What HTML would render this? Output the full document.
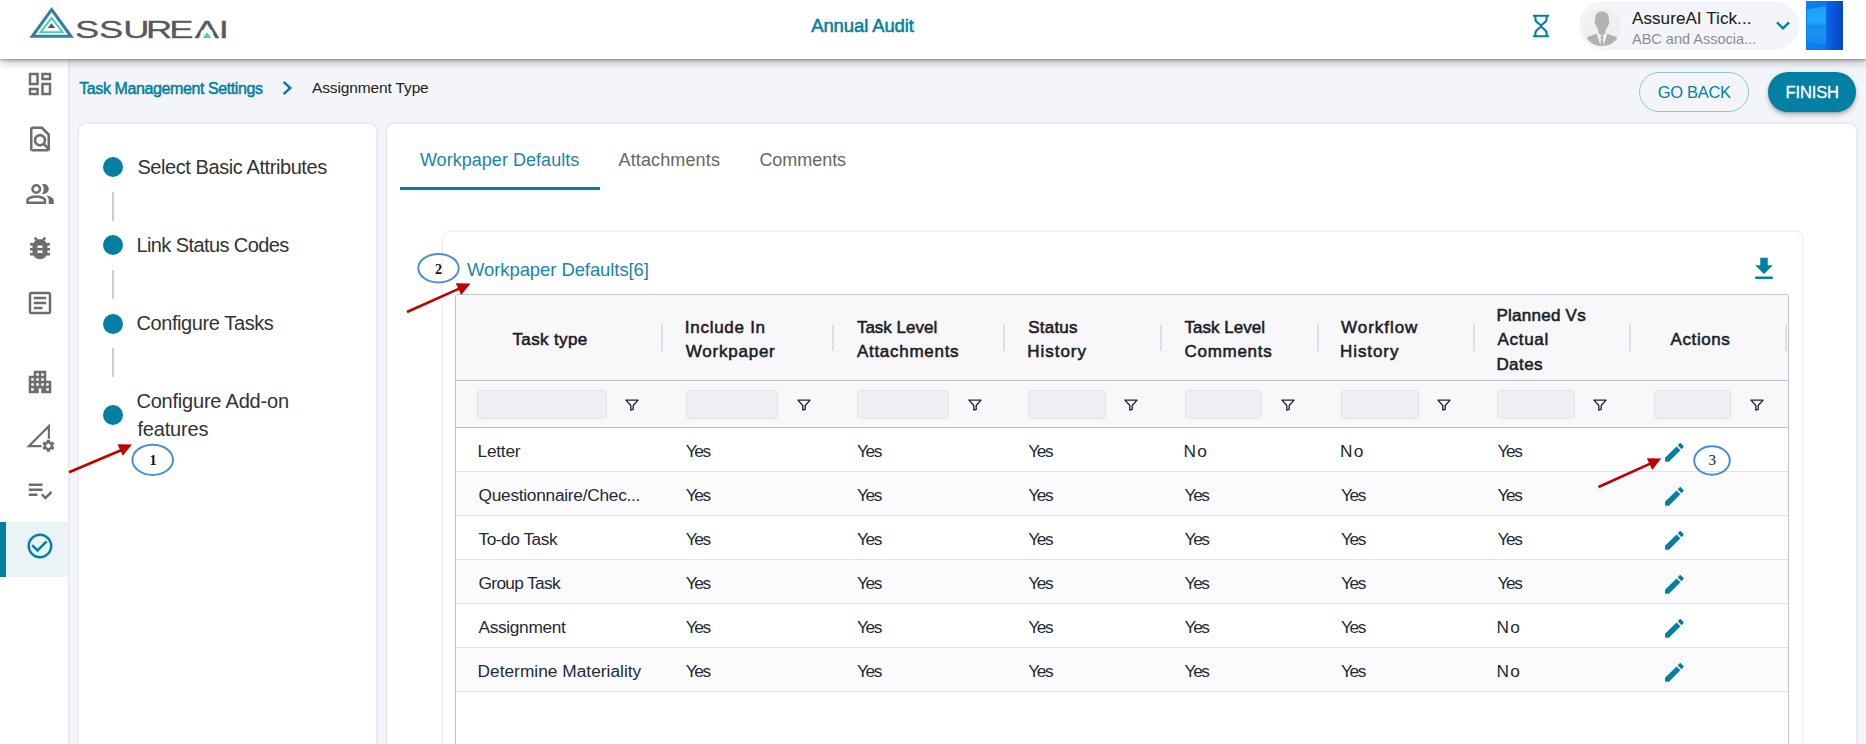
<!DOCTYPE html>
<html lang="en">
<head>
<meta charset="utf-8">
<title>Assignment Type - Workpaper Defaults</title>
<style>
*{box-sizing:border-box;margin:0;padding:0}
html,body{width:1866px;height:744px;overflow:hidden;background:#f4f5fa;font-family:"Liberation Sans",sans-serif}
#app{position:relative;width:1866px;height:744px;overflow:hidden;background:#f4f5fa}
.abs{position:absolute}
.t{position:absolute;white-space:nowrap;line-height:1;z-index:5}
header{position:absolute;left:0;top:0;width:1866px;height:59.3px;background:#fff;box-shadow:0 1px 3px rgba(0,0,0,.32),0 3px 9px rgba(0,0,0,.27);z-index:3}
nav{position:absolute;left:0;top:59px;width:70px;height:700px;background:#fff;border-right:2px solid #ebebec;z-index:2}
nav svg{position:absolute;left:25px;width:30px;height:30px;fill:#6d6d6d}
.active{position:absolute;left:0;top:463px;width:68px;height:54.5px;background:#eaf4f7;border-left:6px solid #0280a3}
.panel{position:absolute;background:#fff;border-radius:7px;box-shadow:0 0 3px rgba(70,70,110,.2);z-index:1}
.dot{position:absolute;width:20px;height:20px;border-radius:50%;background:#0280a3;left:23.8px}
.vl{position:absolute;left:33px;width:1.8px;height:29.3px;background:#cfcfcf}
.pill{position:absolute;left:1579px;top:.8px;width:220.4px;height:49.2px;border-radius:24.6px;background:#f4f5fa}
.btn{position:absolute;top:71.8px;height:40.7px;border-radius:20.4px}
.card{position:absolute;left:441.5px;top:231px;width:1361px;height:560px;border:1px solid #efeff3;border-radius:7px;background:#fff;box-shadow:0 0 3px rgba(80,80,120,.08);z-index:1}
.grid{position:absolute;left:455px;top:294px;width:1334px;height:500px;border:1px solid #bdc2ca;border-top-color:#c6cad1;background:#fff;z-index:2;border-radius:3px;overflow:hidden}
.gh{position:absolute;left:0;top:0;width:100%;height:133px;background:#f8f8fa;border-bottom:1px solid #babfc7}
.ghl{position:absolute;left:0;top:84.6px;width:100%;height:1px;background:#babfc7}
.sep{position:absolute;top:30px;width:2px;height:26px;background:#dcdfe5}
.fi{position:absolute;top:95px;height:29px;border:1px solid #e3e3ea;border-radius:4px;background:#eeeef3}
.fic{position:absolute;top:103.6px;width:14px;height:12.1px}
.row{position:absolute;left:0;width:100%;height:44px;border-bottom:1px solid #dde2eb}
.row.odd{background:#fbfbfd}
.pen{position:absolute;left:1205.9px;top:11.8px;width:24.8px;height:24.8px;fill:#0280a3}
.ann{position:absolute;left:0;top:0;width:1866px;height:744px;z-index:9;pointer-events:none}
</style>
</head>
<body>
<div id="app">

<header>
  <svg class="abs" style="left:26px;top:3px" width="210" height="42" viewBox="26 3 210 42">
    <polygon points="51.6,9.6 32.3,36.3 71,36.3" fill="none" stroke="#2f7fa8" stroke-width="3"/>
    <polygon points="51.6,17.8 40.6,32.2 62.6,32.2" fill="none" stroke="#4fcdb4" stroke-width="2"/>
    <polygon points="51.4,23.2 47.8,27.9 55.2,27.9" fill="#555"/>
    <g transform="translate(77 37.9) scale(1.47 1)"><text x="-1.29 14.9 31.53 47.0 62.8 80.07 96.43" y="0" font-family="Liberation Sans, sans-serif" font-size="24.7" fill="#58595b" stroke="#58595b" stroke-width=".3">SSUREAI</text></g>
    <polygon points="202.1,30.1 211.6,30.1 213.7,34.2 200.0,34.2" fill="#fff"/>
    <polygon points="207,32.2 202.8,37.9 211.2,37.9" fill="#4fcdb4"/>
  </svg>
  <svg class="abs" style="left:1531px;top:13px" width="20" height="26" viewBox="0 0 20 26" fill="none" stroke="#0280a3" stroke-width="2.1" stroke-linecap="round">
    <path d="M2.8 2.8H17.2M2.8 23.2H17.2"/>
    <path d="M4.4 3v3.4c0 3 5.6 5 5.6 6.6s-5.600 3.600-5.600 6.600V23M15.600 3v3.400c0 3-5.600 5-5.600 6.600s5.600 3.600 5.600 6.600V23"/>
  </svg>
  <div class="pill"></div>
  <svg class="abs" style="left:1582.4px;top:7.3px" width="40" height="40" viewBox="0 0 40 40">
    <defs><clipPath id="av"><circle cx="20" cy="20" r="19.1"/></clipPath></defs>
    <circle cx="20" cy="20" r="19.1" fill="#f0f0f0"/>
    <g clip-path="url(#av)" fill="#b1b1b1">
      <path d="M20 4.500c4.200 0 6.800 2.600 6.800 6.400v3.200c.700.300.800 1.600.300 2.800-.300.800-.700 1.100-1 1.200-.500 2-1.500 3.600-2.500 4.600v3.200l9.500 3.600c1.600.600 2.700 2 2.900 3.700l.500 7.800H3.500l.500-7.800c.200-1.700 1.300-3.100 2.900-3.700l9.500-3.600v-3.200c-1-1-2-2.600-2.500-4.600-.300-.100-.700-.400-1-1.200-.500-1.200-.400-2.500.300-2.800v-3.200c0-3.800 2.600-6.400 6.800-6.400z"/>
    </g>
    <g clip-path="url(#av)"><path d="M16.400 25.900l3.600 3 3.600-3 1.800.700-3.600 11.400h-3.600l-3.600-11.400z" fill="#f0f0f0"/>
    <path d="M19 29.200h2l.700 1.500-.900 1 .900 6.300h-3.400l.900-6.300-.900-1z" fill="#b1b1b1"/></g>
  </svg>
  <svg class="abs" style="left:1774px;top:19px" width="18" height="13" viewBox="0 0 18 13" fill="none" stroke="#0280a3" stroke-width="2.400"><path d="M3 3.400l6 6 6-6"/></svg>
  <div class="abs" style="left:1806.3px;top:1.1px;width:36.5px;height:48.7px;background:linear-gradient(90deg,#0a80ee 0%,#0a7aec 50%,#0a64e4 58%,#0a55d8 75%,#0745c4 100%)">
    <div class="abs" style="left:.3px;top:5px;width:19.6px;height:38.400px;background:linear-gradient(180deg,#1c9ffc 0%,#22a8ff 40%,#1b98f6 49%,#148cf0 51%,#1a94f2 70%,#1688ea 100%);clip-path:polygon(0 9%,100% 0,100% 100%,0 95%)"></div>
  </div>
</header>

<nav>
  <!-- centers (page y): 84,138.600,193,248,303,382,437,491,546 ; nav top = 59 -->
  <svg style="top:10px" viewBox="0 0 24 24"><path d="M19 5v2h-4V5h4M9 5v6H5V5h4m10 8v6h-4v-6h4M9 17v2H5v-2h4M21 3h-8v6h8V3zM11 3H3v10h8V3zm10 8h-8v10h8V11zm-10 4H3v6h8v-6z"/></svg>
  <svg style="top:64.500px" viewBox="0 0 24 24"><path d="M14 2H6c-1.100 0-1.990.900-1.990 2L4 20c0 1.100.890 2 1.990 2H18c1.100 0 2-.900 2-2V8l-6-6zM6 4h7l5 5v8.580l-1.840-1.840c1.280-1.940 1.070-4.570-.640-6.280C14.550 8.490 13.280 8 12 8c-1.280 0-2.550.490-3.530 1.460-1.950 1.950-1.950 5.110 0 7.050.970.970 2.250 1.460 3.530 1.460.960 0 1.920-.280 2.750-.830L17.600 20H6V4zm8.110 11.100c-.560.560-1.310.880-2.110.880s-1.550-.310-2.110-.880c-.560-.560-.880-1.310-.880-2.110s.310-1.550.880-2.110c.560-.570 1.310-.880 2.110-.880s1.550.310 2.110.880c.560.560.880 1.310.880 2.110s-.310 1.550-.880 2.110z"/></svg>
  <svg style="top:119.5px" viewBox="0 -960 960 960"><path d="M40-160v-112q0-34 17.500-62.500T104-378q62-31 126-46.500T360-440q66 0 130 15.500T616-378q29 15 46.500 43.500T680-272v112H40Zm720 0v-120q0-44-24.500-84.500T666-434q51 6 96 20.500t84 35.500q36 20 55 44.500t19 53.500v120H760ZM360-480q-66 0-113-47t-47-113q0-66 47-113t113-47q66 0 113 47t47 113q0 66-47 113t-113 47Zm400-160q0 66-47 113t-113 47q-11 0-28-2.500t-28-5.500q27-32 41.500-71t14.500-81q0-42-14.500-81T544-792q14-5 28-6.500t28-1.500q66 0 113 47t47 113ZM120-240h480v-32q0-11-5.500-20T580-306q-54-27-109-40.500T360-360q-56 0-111 13.500T140-306q-9 5-14.500 14t-5.500 20v32Zm240-320q33 0 56.500-23.500T440-640q0-33-23.500-56.500T360-720q-33 0-56.500 23.500T280-640q0 33 23.500 56.500T360-560Z"/></svg>
  <svg style="top:174px" viewBox="0 0 24 24"><path d="M20 8h-2.810c-.450-.780-1.070-1.450-1.820-1.960L17 4.410 15.590 3l-2.170 2.170C12.960 5.060 12.490 5 12 5c-.490 0-.960.060-1.410.170L8.410 3 7 4.410l1.620 1.630C7.880 6.550 7.260 7.220 6.810 8H4v2h2.090c-.050.330-.090.660-.090 1v1H4v2h2v1c0 .340.040.670.090 1H4v2h2.810c1.040 1.790 2.970 3 5.190 3s4.150-1.210 5.190-3H20v-2h-2.090c.050-.330.090-.660.090-1v-1h2v-2h-2v-1c0-.340-.040-.670-.090-1H20V8zm-6 8h-4v-2h4v2zm0-4h-4v-2h4v2z"/></svg>
  <svg style="top:229px" viewBox="0 0 24 24"><path d="M19 5v14H5V5h14m0-2H5c-1.100 0-2 .900-2 2v14c0 1.100.900 2 2 2h14c1.100 0 2-.900 2-2V5c0-1.100-.900-2-2-2z"/><path d="M14 17H7v-2h7v2zm3-4H7v-2h10v2zm0-4H7V7h10v2z"/></svg>
  <svg style="top:308px" viewBox="0 0 24 24"><path d="M17 11V3H7v4H3v14h8v-4h2v4h8V11h-4zM7 19H5v-2h2v2zm0-4H5v-2h2v2zm0-4H5V9h2v2zm4 4H9v-2h2v2zm0-4H9V9h2v2zm0-4H9V5h2v2zm4 8h-2v-2h2v2zm0-4h-2V9h2v2zm0-4h-2V5h2v2zm4 12h-2v-2h2v2zm0-4h-2v-2h2v2z"/></svg>
  <svg style="top:363px" viewBox="0 0 24 24"><path d="M19.1 13.4V3.3L3 19.3H13.2" fill="none" stroke="#6d6d6d" stroke-width="1.7"/><g transform="translate(18.7 19) scale(.5) translate(-12 -12)"><path d="M19.140 12.940c.040-.300.060-.610.060-.940 0-.320-.020-.640-.070-.940l2.030-1.580c.180-.140.230-.410.120-.610l-1.920-3.320c-.120-.220-.370-.290-.590-.220l-2.390.960c-.500-.380-1.030-.700-1.620-.940l-.360-2.540c-.040-.240-.240-.410-.480-.410h-3.840c-.240 0-.430.170-.470.410l-.360 2.540c-.590.240-1.130.570-1.620.940l-2.390-.960c-.220-.080-.470 0-.590.220L2.740 8.870c-.120.210-.080.470.120.610l2.030 1.580c-.050.300-.090.630-.090.940s.020.640.070.940l-2.030 1.580c-.180.140-.230.410-.120.610l1.920 3.320c.120.220.370.290.590.220l2.390-.960c.500.380 1.030.700 1.620.940l.360 2.540c.050.240.240.410.480.410h3.840c.240 0 .440-.170.470-.410l.360-2.540c.590-.240 1.130-.560 1.620-.940l2.390.960c.220.080.470 0 .590-.220l1.920-3.320c.120-.220.070-.470-.120-.610l-2.010-1.580zM12 15.600c-1.980 0-3.600-1.620-3.600-3.600s1.620-3.600 3.600-3.600 3.600 1.620 3.600 3.600-1.620 3.600-3.600 3.600z"/></g></svg>
  <svg style="top:417px" viewBox="0 0 24 24"><path d="M3 10h11v2H3zm0-4h11v2H3zm0 8h7v2H3zm17.590-2.070l-4.250 4.240-2.120-2.120-1.410 1.410L16.340 19 22 13.340z"/></svg>
  <div class="active"></div>
  <svg style="top:472px;fill:#0280a3" viewBox="0 0 24 24"><path d="M16.590 7.580L10 14.170l-3.590-3.580L5 12l5 5 8-8zM12 2C6.480 2 2 6.480 2 12s4.480 10 10 10 10-4.480 10-10S17.520 2 12 2zm0 18c-4.420 0-8-3.580-8-8s3.580-8 8-8 8 3.580 8 8-3.580 8-8 8z"/></svg>
</nav>

<!-- breadcrumb chevron + buttons -->
<svg class="abs" style="left:280px;top:79px" width="16" height="18" viewBox="0 0 16 18" fill="none" stroke="#0280a3" stroke-width="2.5"><path d="M3.600 2.800l6.700 6.200-6.700 6.200"/></svg>
<div class="btn" style="left:1639px;width:110px;border:1.6px solid #93c6d6"></div>
<div class="btn" style="left:1768.4px;width:88px;background:#0280a3;box-shadow:0 3px 5px rgba(0,0,0,.24),0 1px 2px rgba(0,0,0,.16)"></div>

<!-- left stepper panel -->
<div class="panel" style="left:79px;top:124px;width:297px;height:640px">
  <div class="dot" style="top:33px"></div><div class="vl" style="top:67.500px"></div>
  <div class="dot" style="top:111.200px"></div><div class="vl" style="top:146px"></div>
  <div class="dot" style="top:189.600px"></div><div class="vl" style="top:223.800px"></div>
  <div class="dot" style="top:281.300px"></div>
</div>

<!-- right panel -->
<div class="panel" style="left:387px;top:124px;width:1468.8px;height:640px">
  <div class="abs" style="left:13px;top:62.500px;width:199.500px;height:3px;background:#0280a3"></div>
</div>
<div class="card"></div>
<svg class="abs" style="left:1748.9px;top:254px;z-index:3;fill:#0280a3" width="30" height="30" viewBox="0 0 24 24"><path d="M19 9h-4V3H9v6H5l7 7 7-7zM5 18v2h14v-2H5z"/></svg>

<div class="grid">
  <div class="gh">
    <div class="ghl"></div>
    <div class="sep" style="left:204.8px"></div><div class="sep" style="left:376.2px"></div><div class="sep" style="left:547.3px"></div>
    <div class="sep" style="left:703.8px"></div><div class="sep" style="left:860.6px"></div><div class="sep" style="left:1016.6px"></div>
    <div class="sep" style="left:1173.4px"></div><div class="sep" style="left:1329.3px"></div>
    <div class="fi" style="left:20.9px;width:130.1px"></div><svg class="fic" style="left:169.0px" viewBox="0 0 15 13" fill="none" stroke="#1b2836" stroke-width="1.45" stroke-linejoin="round"><path d="M1 1.200h13L8.800 7v4.200L6.200 12V7z"/></svg>
    <div class="fi" style="left:229.8px;width:92.3px"></div><svg class="fic" style="left:340.5px" viewBox="0 0 15 13" fill="none" stroke="#1b2836" stroke-width="1.45" stroke-linejoin="round"><path d="M1 1.200h13L8.800 7v4.200L6.200 12V7z"/></svg>
    <div class="fi" style="left:400.9px;width:92.6px"></div><svg class="fic" style="left:511.5px" viewBox="0 0 15 13" fill="none" stroke="#1b2836" stroke-width="1.45" stroke-linejoin="round"><path d="M1 1.200h13L8.800 7v4.200L6.200 12V7z"/></svg>
    <div class="fi" style="left:572.3px;width:78.0px"></div><svg class="fic" style="left:668.3px" viewBox="0 0 15 13" fill="none" stroke="#1b2836" stroke-width="1.45" stroke-linejoin="round"><path d="M1 1.200h13L8.800 7v4.200L6.200 12V7z"/></svg>
    <div class="fi" style="left:728.6px;width:77.6px"></div><svg class="fic" style="left:824.6px" viewBox="0 0 15 13" fill="none" stroke="#1b2836" stroke-width="1.45" stroke-linejoin="round"><path d="M1 1.200h13L8.800 7v4.200L6.200 12V7z"/></svg>
    <div class="fi" style="left:885.0px;width:78.0px"></div><svg class="fic" style="left:980.6px" viewBox="0 0 15 13" fill="none" stroke="#1b2836" stroke-width="1.45" stroke-linejoin="round"><path d="M1 1.200h13L8.800 7v4.200L6.200 12V7z"/></svg>
    <div class="fi" style="left:1041.4px;width:78.0px"></div><svg class="fic" style="left:1136.6px" viewBox="0 0 15 13" fill="none" stroke="#1b2836" stroke-width="1.45" stroke-linejoin="round"><path d="M1 1.200h13L8.800 7v4.200L6.200 12V7z"/></svg>
    <div class="fi" style="left:1198.2px;width:77.2px"></div><svg class="fic" style="left:1293.7px" viewBox="0 0 15 13" fill="none" stroke="#1b2836" stroke-width="1.45" stroke-linejoin="round"><path d="M1 1.200h13L8.800 7v4.200L6.200 12V7z"/></svg>
    
  </div>
  <div class="row" style="top:133.0px"><svg class="pen" viewBox="0 0 24 24"><path d="M3 17.250V21h3.750L17.810 9.940l-3.750-3.750L3 17.250zM20.710 7.040c.390-.390.390-1.020 0-1.410l-2.340-2.340c-.390-.390-1.020-.390-1.410 0l-1.830 1.830 3.750 3.750 1.830-1.830z"/></svg></div>
  <div class="row odd" style="top:177.0px"><svg class="pen" viewBox="0 0 24 24"><path d="M3 17.250V21h3.750L17.810 9.940l-3.750-3.750L3 17.250zM20.710 7.040c.390-.390.390-1.020 0-1.410l-2.340-2.340c-.390-.390-1.020-.390-1.410 0l-1.830 1.830 3.750 3.750 1.830-1.830z"/></svg></div>
  <div class="row" style="top:221.0px"><svg class="pen" viewBox="0 0 24 24"><path d="M3 17.250V21h3.750L17.810 9.940l-3.750-3.750L3 17.250zM20.710 7.040c.390-.390.390-1.020 0-1.410l-2.340-2.340c-.390-.390-1.020-.390-1.410 0l-1.830 1.830 3.750 3.750 1.830-1.830z"/></svg></div>
  <div class="row odd" style="top:265.0px"><svg class="pen" viewBox="0 0 24 24"><path d="M3 17.250V21h3.750L17.810 9.940l-3.750-3.750L3 17.250zM20.710 7.040c.390-.390.390-1.020 0-1.410l-2.340-2.340c-.390-.390-1.020-.390-1.410 0l-1.830 1.830 3.750 3.750 1.830-1.830z"/></svg></div>
  <div class="row" style="top:309.0px"><svg class="pen" viewBox="0 0 24 24"><path d="M3 17.250V21h3.750L17.810 9.940l-3.750-3.750L3 17.250zM20.710 7.040c.390-.390.390-1.020 0-1.410l-2.340-2.340c-.390-.390-1.020-.390-1.410 0l-1.830 1.830 3.750 3.750 1.830-1.830z"/></svg></div>
  <div class="row odd" style="top:353.0px"><svg class="pen" viewBox="0 0 24 24"><path d="M3 17.250V21h3.750L17.810 9.940l-3.750-3.750L3 17.250zM20.710 7.040c.390-.390.390-1.020 0-1.410l-2.340-2.340c-.390-.390-1.020-.390-1.410 0l-1.830 1.830 3.750 3.750 1.830-1.830z"/></svg></div>
  
</div>

<span class="t" id="t0" style="left:811.2px;top:17.2px;font-size:18.5px;color:#0280a3;letter-spacing:-0.107px;-webkit-text-stroke:0.55px #0280a3;">Annual Audit</span>
<span class="t" id="t1" style="left:1632.0px;top:9.5px;font-size:17px;color:#222;letter-spacing:0.089px;-webkit-text-stroke:0.1px #222;">AssureAI Tick...</span>
<span class="t" id="t2" style="left:1632.0px;top:31.9px;font-size:14.5px;color:#8c8c8c;letter-spacing:0.006px;">ABC and Associa...</span>
<span class="t" id="t3" style="left:79.2px;top:80.6px;font-size:16px;color:#0280a3;letter-spacing:-0.400px;-webkit-text-stroke:0.5px #0280a3;">Task Management Settings</span>
<span class="t" id="t4" style="left:312.0px;top:80.4px;font-size:15.5px;color:#222;letter-spacing:-0.134px;">Assignment Type</span>
<span class="t" id="t5" style="left:1657.8px;top:84.3px;font-size:16.5px;color:#0280a3;letter-spacing:-0.330px;">GO BACK</span>
<span class="t" id="t6" style="left:1785.6px;top:84.3px;font-size:16.5px;color:#fff;letter-spacing:-0.154px;-webkit-text-stroke:0.3px #fff;">FINISH</span>
<span class="t" id="t7" style="left:137.4px;top:157.1px;font-size:20px;color:#333;letter-spacing:-0.418px;">Select Basic Attributes</span>
<span class="t" id="t8" style="left:136.4px;top:235.1px;font-size:20px;color:#333;letter-spacing:-0.588px;">Link Status Codes</span>
<span class="t" id="t9" style="left:136.4px;top:313.4px;font-size:20px;color:#333;letter-spacing:-0.400px;">Configure Tasks</span>
<span class="t" id="t10" style="left:136.4px;top:390.6px;font-size:20px;color:#333;letter-spacing:-0.203px;">Configure Add-on</span>
<span class="t" id="t11" style="left:137.4px;top:418.5px;font-size:20px;color:#333;letter-spacing:-0.181px;">features</span>
<span class="t" id="t12" style="left:419.9px;top:150.6px;font-size:18px;color:#1a86a8;letter-spacing:0.039px;">Workpaper Defaults</span>
<span class="t" id="t13" style="left:618.5px;top:150.6px;font-size:18px;color:#666;letter-spacing:0.135px;">Attachments</span>
<span class="t" id="t14" style="left:759.4px;top:150.6px;font-size:18px;color:#666;letter-spacing:-0.046px;">Comments</span>
<span class="t" id="t15" style="left:467.0px;top:260.5px;font-size:18.5px;color:#1a86a8;letter-spacing:-0.089px;">Workpaper Defaults[6]</span>
<span class="t" id="t16" style="left:512.5px;top:330.6px;font-size:17px;color:#1b2027;letter-spacing:0.368px;-webkit-text-stroke:0.55px #1b2027;">Task type</span>
<span class="t" id="t17" style="left:684.8px;top:318.6px;font-size:17px;color:#1b2027;letter-spacing:0.726px;-webkit-text-stroke:0.55px #1b2027;">Include In</span>
<span class="t" id="t18" style="left:685.8px;top:343.0px;font-size:17px;color:#1b2027;letter-spacing:0.766px;-webkit-text-stroke:0.55px #1b2027;">Workpaper</span>
<span class="t" id="t19" style="left:856.9px;top:318.6px;font-size:17px;color:#1b2027;letter-spacing:-0.005px;-webkit-text-stroke:0.55px #1b2027;">Task Level</span>
<span class="t" id="t20" style="left:856.9px;top:343.0px;font-size:17px;color:#1b2027;letter-spacing:0.721px;-webkit-text-stroke:0.55px #1b2027;">Attachments</span>
<span class="t" id="t21" style="left:1028.3px;top:318.6px;font-size:17px;color:#1b2027;letter-spacing:0.201px;-webkit-text-stroke:0.55px #1b2027;">Status</span>
<span class="t" id="t22" style="left:1027.3px;top:343.0px;font-size:17px;color:#1b2027;letter-spacing:0.951px;-webkit-text-stroke:0.55px #1b2027;">History</span>
<span class="t" id="t23" style="left:1184.6px;top:318.5px;font-size:17px;color:#1b2027;letter-spacing:0.006px;-webkit-text-stroke:0.55px #1b2027;">Task Level</span>
<span class="t" id="t24" style="left:1184.6px;top:343.1px;font-size:17px;color:#1b2027;letter-spacing:0.702px;-webkit-text-stroke:0.55px #1b2027;">Comments</span>
<span class="t" id="t25" style="left:1341.0px;top:318.5px;font-size:17px;color:#1b2027;letter-spacing:0.970px;-webkit-text-stroke:0.55px #1b2027;">Workflow</span>
<span class="t" id="t26" style="left:1340.0px;top:343.1px;font-size:17px;color:#1b2027;letter-spacing:0.918px;-webkit-text-stroke:0.55px #1b2027;">History</span>
<span class="t" id="t27" style="left:1496.4px;top:306.5px;font-size:17px;color:#1b2027;letter-spacing:0.261px;-webkit-text-stroke:0.55px #1b2027;">Planned Vs</span>
<span class="t" id="t28" style="left:1497.4px;top:331.0px;font-size:17px;color:#1b2027;letter-spacing:0.726px;-webkit-text-stroke:0.55px #1b2027;">Actual</span>
<span class="t" id="t29" style="left:1496.4px;top:355.8px;font-size:17px;color:#1b2027;letter-spacing:0.448px;-webkit-text-stroke:0.55px #1b2027;">Dates</span>
<span class="t" id="t30" style="left:1670.6px;top:330.6px;font-size:17px;color:#1b2027;letter-spacing:0.575px;-webkit-text-stroke:0.55px #1b2027;">Actions</span>
<span class="t" id="t31" style="left:477.5px;top:443.4px;font-size:17.3px;color:#232a33;letter-spacing:-0.227px;">Letter</span>
<span class="t" id="t32" style="left:685.7px;top:443.4px;font-size:17.3px;color:#232a33;letter-spacing:-1.400px;">Yes</span>
<span class="t" id="t33" style="left:856.9px;top:443.4px;font-size:17.3px;color:#232a33;letter-spacing:-1.400px;">Yes</span>
<span class="t" id="t34" style="left:1028.2px;top:443.4px;font-size:17.3px;color:#232a33;letter-spacing:-1.400px;">Yes</span>
<span class="t" id="t35" style="left:1183.6px;top:443.4px;font-size:17.3px;color:#232a33;letter-spacing:1.300px;">No</span>
<span class="t" id="t36" style="left:1340.0px;top:443.4px;font-size:17.3px;color:#232a33;letter-spacing:1.300px;">No</span>
<span class="t" id="t37" style="left:1497.4px;top:443.4px;font-size:17.3px;color:#232a33;letter-spacing:-1.400px;">Yes</span>
<span class="t" id="t38" style="left:478.5px;top:487.4px;font-size:17.3px;color:#232a33;letter-spacing:-0.262px;">Questionnaire/Chec...</span>
<span class="t" id="t39" style="left:685.7px;top:487.4px;font-size:17.3px;color:#232a33;letter-spacing:-1.400px;">Yes</span>
<span class="t" id="t40" style="left:856.9px;top:487.4px;font-size:17.3px;color:#232a33;letter-spacing:-1.400px;">Yes</span>
<span class="t" id="t41" style="left:1028.2px;top:487.4px;font-size:17.3px;color:#232a33;letter-spacing:-1.400px;">Yes</span>
<span class="t" id="t42" style="left:1184.6px;top:487.4px;font-size:17.3px;color:#232a33;letter-spacing:-1.400px;">Yes</span>
<span class="t" id="t43" style="left:1341.0px;top:487.4px;font-size:17.3px;color:#232a33;letter-spacing:-1.400px;">Yes</span>
<span class="t" id="t44" style="left:1497.4px;top:487.4px;font-size:17.3px;color:#232a33;letter-spacing:-1.400px;">Yes</span>
<span class="t" id="t45" style="left:478.5px;top:531.4px;font-size:17.3px;color:#232a33;letter-spacing:-0.469px;">To-do Task</span>
<span class="t" id="t46" style="left:685.7px;top:531.4px;font-size:17.3px;color:#232a33;letter-spacing:-1.400px;">Yes</span>
<span class="t" id="t47" style="left:856.9px;top:531.4px;font-size:17.3px;color:#232a33;letter-spacing:-1.400px;">Yes</span>
<span class="t" id="t48" style="left:1028.2px;top:531.4px;font-size:17.3px;color:#232a33;letter-spacing:-1.400px;">Yes</span>
<span class="t" id="t49" style="left:1184.6px;top:531.4px;font-size:17.3px;color:#232a33;letter-spacing:-1.400px;">Yes</span>
<span class="t" id="t50" style="left:1341.0px;top:531.4px;font-size:17.3px;color:#232a33;letter-spacing:-1.400px;">Yes</span>
<span class="t" id="t51" style="left:1497.4px;top:531.4px;font-size:17.3px;color:#232a33;letter-spacing:-1.400px;">Yes</span>
<span class="t" id="t52" style="left:478.5px;top:575.4px;font-size:17.3px;color:#232a33;letter-spacing:-0.658px;">Group Task</span>
<span class="t" id="t53" style="left:685.7px;top:575.4px;font-size:17.3px;color:#232a33;letter-spacing:-1.400px;">Yes</span>
<span class="t" id="t54" style="left:856.9px;top:575.4px;font-size:17.3px;color:#232a33;letter-spacing:-1.400px;">Yes</span>
<span class="t" id="t55" style="left:1028.2px;top:575.4px;font-size:17.3px;color:#232a33;letter-spacing:-1.400px;">Yes</span>
<span class="t" id="t56" style="left:1184.6px;top:575.4px;font-size:17.3px;color:#232a33;letter-spacing:-1.400px;">Yes</span>
<span class="t" id="t57" style="left:1341.0px;top:575.4px;font-size:17.3px;color:#232a33;letter-spacing:-1.400px;">Yes</span>
<span class="t" id="t58" style="left:1497.4px;top:575.4px;font-size:17.3px;color:#232a33;letter-spacing:-1.400px;">Yes</span>
<span class="t" id="t59" style="left:478.5px;top:619.4px;font-size:17.3px;color:#232a33;letter-spacing:-0.332px;">Assignment</span>
<span class="t" id="t60" style="left:685.7px;top:619.4px;font-size:17.3px;color:#232a33;letter-spacing:-1.400px;">Yes</span>
<span class="t" id="t61" style="left:856.9px;top:619.4px;font-size:17.3px;color:#232a33;letter-spacing:-1.400px;">Yes</span>
<span class="t" id="t62" style="left:1028.2px;top:619.4px;font-size:17.3px;color:#232a33;letter-spacing:-1.400px;">Yes</span>
<span class="t" id="t63" style="left:1184.6px;top:619.4px;font-size:17.3px;color:#232a33;letter-spacing:-1.400px;">Yes</span>
<span class="t" id="t64" style="left:1341.0px;top:619.4px;font-size:17.3px;color:#232a33;letter-spacing:-1.400px;">Yes</span>
<span class="t" id="t65" style="left:1496.4px;top:619.4px;font-size:17.3px;color:#232a33;letter-spacing:1.300px;">No</span>
<span class="t" id="t66" style="left:477.5px;top:663.4px;font-size:17.3px;color:#232a33;letter-spacing:0.024px;">Determine Materiality</span>
<span class="t" id="t67" style="left:685.7px;top:663.4px;font-size:17.3px;color:#232a33;letter-spacing:-1.400px;">Yes</span>
<span class="t" id="t68" style="left:856.9px;top:663.4px;font-size:17.3px;color:#232a33;letter-spacing:-1.400px;">Yes</span>
<span class="t" id="t69" style="left:1028.2px;top:663.4px;font-size:17.3px;color:#232a33;letter-spacing:-1.400px;">Yes</span>
<span class="t" id="t70" style="left:1184.6px;top:663.4px;font-size:17.3px;color:#232a33;letter-spacing:-1.400px;">Yes</span>
<span class="t" id="t71" style="left:1341.0px;top:663.4px;font-size:17.3px;color:#232a33;letter-spacing:-1.400px;">Yes</span>
<span class="t" id="t72" style="left:1496.4px;top:663.4px;font-size:17.3px;color:#232a33;letter-spacing:1.300px;">No</span>

<svg class="ann" viewBox="0 0 1866 744">
  <g fill="none" stroke="#4a8fd6" stroke-width="2">
    <ellipse cx="152.7" cy="459.8" rx="20.3" ry="15.1" fill="none"/>
    <ellipse cx="438.5" cy="268.2" rx="20.2" ry="14.2" fill="none"/>
    <ellipse cx="1712" cy="460.5" rx="17.8" ry="14.2" fill="none"/>
  </g>
  <g font-family="Liberation Serif, serif" font-weight="700" font-size="14.2" fill="#111" text-anchor="middle">
    <text x="153" y="464.6">1</text><text x="438.500" y="273.7">2</text><text x="1712.3" y="465.4" font-weight="400" font-size="15">3</text>
  </g>
  <g stroke="#c00000" stroke-width="2.600" fill="#c00000">
    <line x1="69" y1="472.300" x2="124" y2="449"/><polygon points="132,444.600 117.500,444.200 122.800,455.800" stroke="none"/>
    <line x1="407" y1="312" x2="462" y2="287.400"/><polygon points="470.500,283.400 455.800,283.200 461.200,295" stroke="none"/>
    <line x1="1598.500" y1="487" x2="1653" y2="462.400"/><polygon points="1661.200,458.600 1646.800,458.200 1652.200,470" stroke="none"/>
  </g>
</svg>

</div>
</body>
</html>
